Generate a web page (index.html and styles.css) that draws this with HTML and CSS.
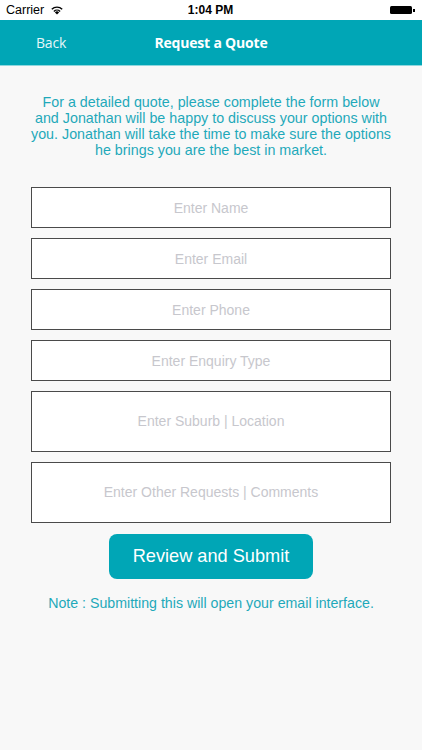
FILE: index.html
```html
<!DOCTYPE html>
<html lang="en">

<head>
    <meta charset="UTF-8">
    <meta name="viewport" content="width=device-width, initial-scale=1.0">
    <title>Request a Quote</title>
    <link rel="stylesheet" href="styles.css">
</head>

<body>
    <!-- Barra de estado -->
    <div class="status-bar">
        <div class="status-left">
            Carrier
            <svg class="wifi" width="14" height="10" viewBox="0 0 14 10">
                <path d="M7 9.6 L4.9 7.4 A3 3 0 0 1 9.1 7.4 Z" fill="#000"/>
                <path d="M3.4 5.9 A5.1 5.1 0 0 1 10.6 5.9 L9.6 6.9 A3.7 3.7 0 0 0 4.4 6.9 Z" fill="#000"/>
                <path d="M1.3 3.8 A8 8 0 0 1 12.7 3.8 L11.7 4.8 A6.6 6.6 0 0 0 2.3 4.8 Z" fill="#000"/>
            </svg>
        </div>
        <div class="status-time">1:04 PM</div>
        <div class="status-right">
            <span class="battery"></span><span class="battery-tip"></span>
        </div>
    </div>

    <header class="nav-bar">
        <a class="nav-back" href="javascript:history.go(-1);">Back</a>
        <h1 class="nav-title">Request a Quote</h1>
    </header>

    <div class="content">
        <p class="intro">For a detailed quote, please complete the form below and Jonathan will be happy to discuss your options with you. Jonathan will take the time to make sure the options he brings you are the best in market.</p>

        <form class="quote-form">
            <input class="field" type="text" placeholder="Enter Name">
            <input class="field" type="email" placeholder="Enter Email">
            <input class="field" type="tel" placeholder="Enter Phone">
            <input class="field" type="text" placeholder="Enter Enquiry Type">
            <textarea class="field field-tall" placeholder="Enter Suburb | Location"></textarea>
            <textarea class="field field-tall" placeholder="Enter Other Requests | Comments"></textarea>
            <button class="submit-btn" type="button">Review and Submit</button>
        </form>

        <p class="note">Note : Submitting this will open your email interface.</p>
    </div>
</body>

</html>
```

FILE: styles.css
```css
body {
    font-family: "Liberation Sans", Arial, sans-serif;
    margin: 0;
    padding: 0;
    background-color: #f8f8f8;
    width: 422px;
    height: 750px;
    overflow: hidden;
}

.status-bar {
    height: 20px;
    background-color: #fff;
    display: flex;
    align-items: center;
    justify-content: space-between;
    padding: 0 7px 0 6px;
    font-size: 12px;
    color: #000;
}

.status-left {
    display: flex;
    align-items: center;
    gap: 6px;
    width: 100px;
    font-size: 12.5px;
}

.wifi {
    margin-top: -1px;
}

.status-time {
    font-weight: bold;
    font-size: 12px;
}

.status-right {
    width: 100px;
    display: flex;
    justify-content: flex-end;
    align-items: center;
}

.battery {
    display: inline-block;
    width: 22px;
    height: 8px;
    background-color: #000;
    border-radius: 1.5px;
}

.battery-tip {
    display: inline-block;
    width: 1.5px;
    height: 3px;
    background-color: #000;
    margin-left: 1px;
}

.nav-bar {
    background-color: #00a6b6;
    height: 45px;
    border-bottom: 1px solid #8fd7de;
    display: flex;
    align-items: center;
    position: relative;
}

.nav-back {
    color: #e6f7f9;
    text-decoration: none;
    font-family: "Open Sans", sans-serif;
    font-size: 14px;
    margin-left: 36px;
    letter-spacing: -0.2px;
}

.nav-title {
    position: absolute;
    left: 0;
    right: 0;
    text-align: center;
    margin: 0;
    color: #fff;
    font-family: "Open Sans", sans-serif;
    font-size: 14px;
    font-weight: bold;
    letter-spacing: -0.2px;
    pointer-events: none;
}

.content {
    padding: 28px 31px 0 31px;
    display: flex;
    flex-direction: column;
    align-items: center;
}

.intro {
    width: 360px;
    margin: 0;
    text-align: center;
    color: #1fa9ba;
    font-size: 14.3px;
    line-height: 16px;
}

.quote-form {
    width: 100%;
    margin-top: 29px;
    display: flex;
    flex-direction: column;
    gap: 10px;
    align-items: center;
}

.field {
    box-sizing: border-box;
    width: 360px;
    height: 41px;
    border: 1.5px solid #4a4a4a;
    background-color: #fff;
    text-align: center;
    font-family: "Liberation Sans", Arial, sans-serif;
    font-size: 14px;
    padding: 0;
    margin: 0;
    outline: none;
    resize: none;
}

.field::placeholder {
    color: #c7c7cd;
}

.field-tall {
    height: 61px;
    padding-top: 21px;
}

.submit-btn {
    margin-top: 1px;
    width: 204px;
    height: 45px;
    background-color: #00a6b6;
    color: #fff;
    border: none;
    border-radius: 8px;
    font-family: "Liberation Sans", Arial, sans-serif;
    font-size: 18.2px;
    cursor: pointer;
}

.note {
    margin: 16px 0 0 0;
    color: #1fa9ba;
    font-size: 14.2px;
    white-space: nowrap;
}
```
